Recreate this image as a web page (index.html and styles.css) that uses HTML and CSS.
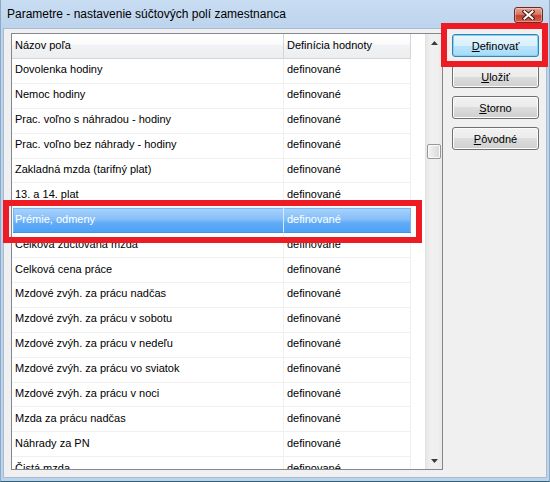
FILE: index.html
```html
<!DOCTYPE html>
<html>
<head>
<meta charset="utf-8">
<link rel="stylesheet" href="styles.css">
</head>
<body>
<div class="window">
  <div class="titlebar">
    <span class="title">Parametre - nastavenie súčtových polí zamestnanca</span>
    <div class="close">
      <svg width="13" height="10" viewBox="0 0 13 10"><path d="M2.5 1.5 L10.5 8.5 M10.5 1.5 L2.5 8.5" stroke="#4a1a14" stroke-width="4" stroke-linecap="square"/><path d="M2.5 1.5 L10.5 8.5 M10.5 1.5 L2.5 8.5" stroke="#ffffff" stroke-width="2" stroke-linecap="square"/></svg>
    </div>
  </div>
  <div class="client">
    <div class="listbox">
      <div class="table">
        <div class="row head"><div class="cell c1">Názov poľa</div><div class="cell c2">Definícia hodnoty</div></div>
        <div class="row"><div class="cell c1">Dovolenka hodiny</div><div class="cell c2">definované</div></div>
        <div class="row"><div class="cell c1">Nemoc hodiny</div><div class="cell c2">definované</div></div>
        <div class="row"><div class="cell c1">Prac. voľno s náhradou - hodiny</div><div class="cell c2">definované</div></div>
        <div class="row"><div class="cell c1">Prac. voľno bez náhrady - hodiny</div><div class="cell c2">definované</div></div>
        <div class="row"><div class="cell c1">Zakladná mzda (tarifný plat)</div><div class="cell c2">definované</div></div>
        <div class="row"><div class="cell c1">13. a 14. plat</div><div class="cell c2">definované</div></div>
        <div class="row sel"><div class="cell c1">Prémie, odmeny</div><div class="cell c2">definované</div></div>
        <div class="row"><div class="cell c1">Celková zúčtovaná mzda</div><div class="cell c2">definované</div></div>
        <div class="row"><div class="cell c1">Celková cena práce</div><div class="cell c2">definované</div></div>
        <div class="row"><div class="cell c1">Mzdové zvýh. za prácu nadčas</div><div class="cell c2">definované</div></div>
        <div class="row"><div class="cell c1">Mzdové zvýh. za prácu v sobotu</div><div class="cell c2">definované</div></div>
        <div class="row"><div class="cell c1">Mzdové zvýh. za prácu v nedeľu</div><div class="cell c2">definované</div></div>
        <div class="row"><div class="cell c1">Mzdové zvýh. za prácu vo sviatok</div><div class="cell c2">definované</div></div>
        <div class="row"><div class="cell c1">Mzdové zvýh. za prácu v noci</div><div class="cell c2">definované</div></div>
        <div class="row"><div class="cell c1">Mzda za prácu nadčas</div><div class="cell c2">definované</div></div>
        <div class="row"><div class="cell c1">Náhrady za PN</div><div class="cell c2">definované</div></div>
        <div class="row"><div class="cell c1">Čistá mzda</div><div class="cell c2">definované</div></div>
      </div>
      <div class="vscroll">
        <div class="sb-btn"><svg width="7" height="4" viewBox="0 0 7 4"><path d="M0 4 L3.5 0 L7 4 Z" fill="#3c3c3c"/></svg></div>
        <div class="sb-track"><div class="thumb"></div></div>
        <div class="sb-btn"><svg width="7" height="4" viewBox="0 0 7 4"><path d="M0 0 L7 0 L3.5 4 Z" fill="#3c3c3c"/></svg></div>
      </div>
    </div>
    <div class="buttons">
      <button class="btn default"><u>D</u>efinovať</button>
      <button class="btn"><u>U</u>ložiť</button>
      <button class="btn"><u>S</u>torno</button>
      <button class="btn"><u>P</u>ôvodné</button>
    </div>
  </div>
  <div class="mark mark-row"></div>
  <div class="mark mark-btn"></div>
</div>
</body>
</html>
```
FILE: styles.css
```css
* { box-sizing: border-box; }
html, body { margin: 0; padding: 0; }
body {
  width: 550px;
  height: 482px;
  overflow: hidden;
  font-family: "Liberation Sans", Arial, sans-serif;
  font-size: 11px;
  color: #000;
}
.window {
  position: relative;
  width: 550px;
  height: 482px;
  display: flex;
  flex-direction: column;
  background: linear-gradient(#c8ddf2, #bcd3ec 30px, #bcd3ec);
  border-left: 1px solid #8ea9c6;
  border-right: 1px solid #8ea9c6;
  border-bottom: 1px solid #2f6078;
}
.titlebar {
  height: 28px;
  flex: none;
  display: flex;
  align-items: center;
  padding: 0 6px 0 6px;
}
.title {
  font-size: 12px;
  color: #000;
  padding-bottom: 1px;
}
.close {
  margin-left: auto;
  width: 29px;
  height: 16px;
  margin-top: 1px;
  border: 1px solid #6b2a22;
  border-radius: 3px;
  background: linear-gradient(#e8a493, #d27865 45%, #c2402d 55%, #d0624d);
  box-shadow: inset 0 0 0 1px rgba(255,255,255,0.35);
  display: flex;
  align-items: center;
  justify-content: center;
}
.close svg { display: block; }
.client {
  flex: 1;
  margin: 0 2px 3px 2px;
  background: #f0f0f0;
  border: 1px solid #a7bcd3;
  display: flex;
  gap: 9px;
  padding: 4px 8px 7px 7px;
}
.listbox {
  width: 432px;
  height: 437px;
  border: 1px solid #828790;
  background: #fff;
  display: flex;
  flex: none;
}
.table {
  flex: 1;
  overflow: hidden;
}
.row {
  display: flex;
  width: 399px;
  height: 24.9px;
}
.head { height: 25px; }
.cell {
  height: 100%;
  display: flex;
  align-items: center;
  padding: 0 0 3px 3px;
  border-bottom: 1px solid #f0f0f0;
  border-right: 1px solid #f0f0f0;
  white-space: nowrap;
  overflow: hidden;
}
.c1 { width: 272px; }
.c2 { width: 127px; }
.head .cell {
  padding-bottom: 2px;
  background: linear-gradient(#ffffff, #fbfbfc 40%, #f1f2f4 50%, #eceef0);
  border-bottom: 1px solid #d5d5d5;
  border-right: 1px solid #d5d5d5;
}
.sel {
  width: 398px;
  margin-left: 1px;
  background: linear-gradient(#a9d3fd, #86bef8 45%, #61abf6 60%, #4da1f5);
  box-shadow: inset 0 0 0 1px #7ab5f0;
}
.sel .cell {
  color: #fff;
  border-bottom: 1px solid #3f95ee;
  border-right: 1px solid #d6eafd;
}
.sel .c1 { width: 271px; padding-left: 2px; }
.sel .c2 { border-right: none; }
.vscroll {
  width: 17px;
  flex: none;
  display: flex;
  flex-direction: column;
  background: linear-gradient(to right, #e6e6e6, #f0f0f0 30%, #f0f0f0 70%, #e9e9e9);
  border-left: 1px solid #e3e3e3;
}
.sb-btn {
  height: 17px;
  flex: none;
  display: flex;
  align-items: center;
  justify-content: center;
}
.sb-btn svg { display: block; }
.sb-track { flex: 1; padding-top: 93px; }
.thumb {
  width: 14px;
  height: 15px;
  margin-left: 1px;
  border: 1px solid #979797;
  border-radius: 2px;
  background: linear-gradient(to right, #f4f4f4, #e6e6e6 50%, #d8d8d8);
  box-shadow: inset 0 0 0 1px #fbfbfb;
}
.buttons {
  width: 87px;
  flex: none;
  display: flex;
  flex-direction: column;
  gap: 8px;
  padding-top: 1px;
}
.btn {
  height: 23px;
  width: 87px;
  font-family: "Liberation Sans", Arial, sans-serif;
  font-size: 11px;
  color: #000;
  border: 1px solid #707070;
  border-radius: 3px;
  background: linear-gradient(#f2f2f2, #ebebeb 50%, #dddddd 50%, #cfcfcf);
  box-shadow: inset 0 0 0 1px #fcfcfc;
  padding: 0;
}
.btn.default {
  border-color: #3c7fb1;
  background: linear-gradient(#eaf6fd, #d9f0fc 50%, #bee6fd 50%, #a7d9f5);
  box-shadow: inset 0 0 0 1px #7cd4f6;
}
.mark {
  position: absolute;
  border: 6px solid #ed1c24;
}
.mark-row { left: 2px; top: 200px; width: 419px; height: 43px; }
.mark-btn { left: 440px; top: 23px; width: 107px; height: 44px; }
```
